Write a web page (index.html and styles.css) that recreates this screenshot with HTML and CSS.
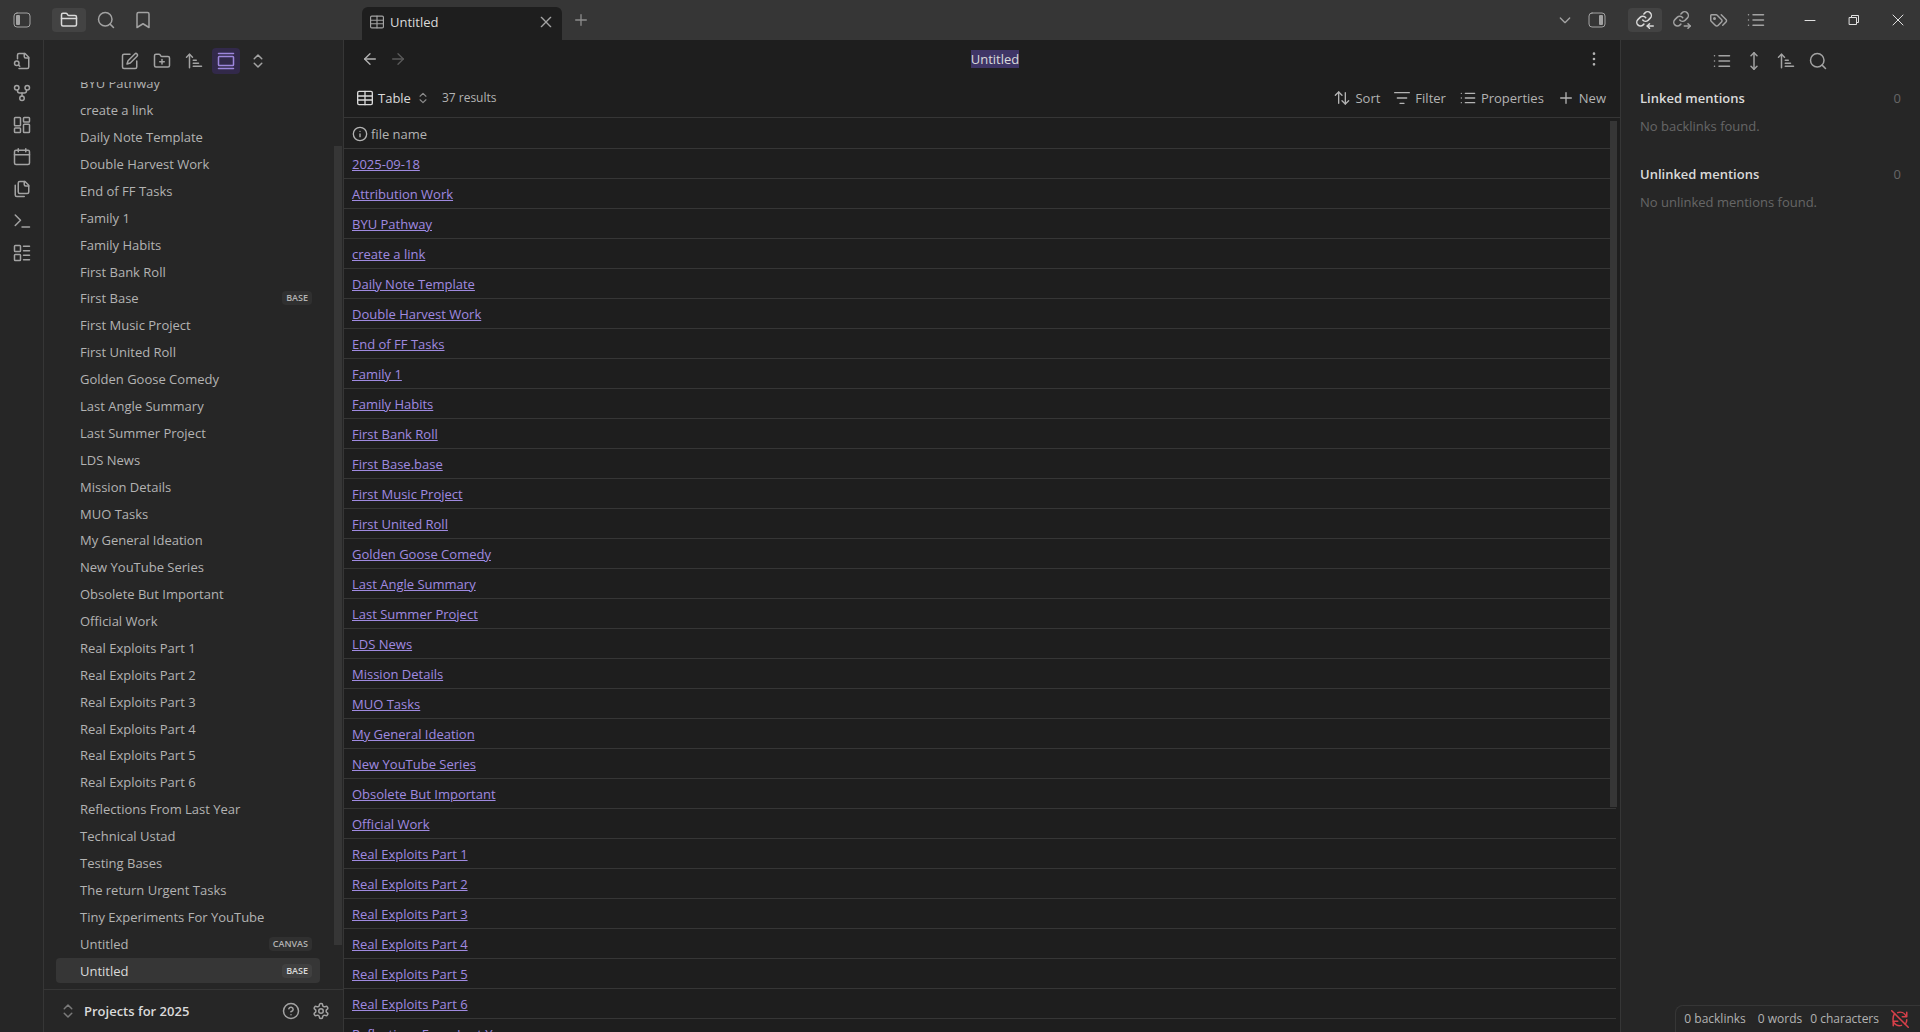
FILE: index.html
```
<!DOCTYPE html>
<html lang="en">
<head>
  <meta charset="UTF-8">
  <meta name="viewport" content="width=device-width, initial-scale=1.0">
  <title>Untitled - Projects for 2025</title>
  <link rel="stylesheet" href="styles.css">
</head>
<body>
<!-- icons used more than once -->
<svg class="sprite" aria-hidden="true">
  <symbol id="i-search" viewBox="0 0 24 24"><circle cx="11" cy="11" r="9"/><path d="m22 22-4.5-4.5"/></symbol>
  <symbol id="i-updown" viewBox="0 0 24 24"><path d="m7 15 5 5 5-5"/><path d="m7 9 5-5 5 5"/></symbol>
  <symbol id="i-sort-asc" viewBox="0 0 24 24"><path d="m2 7 4-4 4 4"/><path d="M6 3v18"/><path d="M11 11h4"/><path d="M11 15h7"/><path d="M11 19h11"/></symbol>
  <symbol id="i-list" viewBox="0 0 24 24"><path d="M8 5h14"/><path d="M8 12h14"/><path d="M8 19h14"/><path d="M2 5h.01"/><path d="M2 12h.01"/><path d="M2 19h.01"/></symbol>
  <symbol id="i-table" viewBox="0 0 24 24"><rect x="1" y="2" width="22" height="20" rx="2"/><path d="M12 2v20"/><path d="M1 9h22"/><path d="M1 15h22"/></symbol>
  <symbol id="i-plus" viewBox="0 0 24 24"><path d="M4 12h16"/><path d="M12 4v16"/></symbol>
  <symbol id="i-close" viewBox="0 0 24 24"><path d="M19 5 5 19"/><path d="m5 5 14 14"/></symbol>
  <symbol id="i-chain" viewBox="0 0 24 24"><path d="M9 12a5 5 0 0 0 7 .500l3-3a4.800 4.800 0 0 0-7-7l-1.500 1.500"/><path d="M13 9a5 5 0 0 0-7.500-.500l-3 3a4.800 4.800 0 0 0 7 7l1-1"/></symbol>
</svg>

<div class="app">
  <header class="titlebar">
    <div class="titlebar-left">
      <button type="button" class="icon-btn" aria-label="Toggle left sidebar"><svg class="icon toggle" viewBox="0 0 18 16"><rect x="1" y="1" width="16" height="14" rx="3"/><rect class="solid" x="3" y="3" width="4" height="10" rx="1"/></svg></button>
      <div class="tab-icons">
        <button type="button" class="icon-btn active" aria-label="Files"><svg class="icon" viewBox="0 0 24 24"><path d="M20 20a2 2 0 0 0 2-2V8a2 2 0 0 0-2-2h-8a2 2 0 0 1-1.700-.9L9.500 3.900A2 2 0 0 0 7.900 3H4a2 2 0 0 0-2 2v13a2 2 0 0 0 2 2Z"/><path d="M2 10h20"/></svg></button>
        <button type="button" class="icon-btn" aria-label="Search"><svg class="icon"><use href="#i-search"/></svg></button>
        <button type="button" class="icon-btn" aria-label="Bookmarks"><svg class="icon" viewBox="0 0 24 24"><path d="m20 22-8-5-8 5V4a2 2 0 0 1 2-2h12a2 2 0 0 1 2 2z"/></svg></button>
      </div>
    </div>
    <div class="titlebar-main">
      <div class="tab">
        <svg class="icon small"><use href="#i-table"/></svg>
        <span class="tab-name">Untitled</span>
        <button type="button" class="plain-btn" aria-label="Close tab"><svg class="icon small"><use href="#i-close"/></svg></button>
      </div>
      <button type="button" class="plain-btn dim new-tab" aria-label="New tab"><svg class="icon small"><use href="#i-plus"/></svg></button>
      <div class="titlebar-end">
        <button type="button" class="plain-btn" aria-label="Tab list"><svg class="icon small" viewBox="0 0 24 24"><path d="m5 9 7 7 7-7"/></svg></button>
        <button type="button" class="plain-btn" aria-label="Toggle right sidebar"><svg class="icon toggle" viewBox="0 0 18 16"><rect x="1" y="1" width="16" height="14" rx="3"/><rect class="solid" x="11" y="3" width="4" height="10" rx="1"/></svg></button>
      </div>
    </div>
    <div class="titlebar-right">
      <div class="tab-icons">
        <button type="button" class="icon-btn active" aria-label="Backlinks"><svg class="icon" viewBox="0 0 24 24"><use href="#i-chain"/><path d="M23 20h-8"/><path d="m18 17-3 3 3 3"/></svg></button>
        <button type="button" class="icon-btn" aria-label="Outgoing links"><svg class="icon" viewBox="0 0 24 24"><use href="#i-chain"/><path d="M15 20h8"/><path d="m20 17 3 3-3 3"/></svg></button>
        <button type="button" class="icon-btn" aria-label="Tags"><svg class="icon" viewBox="0 0 24 24"><path d="m15 5 6.300 6.300a2.400 2.400 0 0 1 0 3.400L17 19"/><path d="M9.600 5.600A2 2 0 0 0 8.200 5H2a1 1 0 0 0-1 1v6.200a2 2 0 0 0 .600 1.400l5.700 5.700a2.400 2.400 0 0 0 3.400 0l4.600-4.600a2.400 2.400 0 0 0 0-3.400Z"/><circle cx="6" cy="10" r="1"/></svg></button>
        <button type="button" class="icon-btn" aria-label="Outline"><svg class="icon"><use href="#i-list"/></svg></button>
      </div>
      <div class="window-controls">
        <button type="button" aria-label="Minimize"><svg class="icon win" viewBox="0 0 12 12"><path d="M1 6.500h10"/></svg></button>
        <button type="button" aria-label="Restore"><svg class="icon win" viewBox="0 0 12 12"><path d="M1.500 3.500h7v7h-7z"/><path d="M3.500 3.500v-2h7v7h-2"/></svg></button>
        <button type="button" aria-label="Close"><svg class="icon win" viewBox="0 0 12 12"><path d="m1 1 10 10"/><path d="M11 1 1 11"/></svg></button>
      </div>
    </div>
  </header>

  <div class="workspace">
    <nav class="ribbon">
      <button type="button" aria-label="Open quick switcher"><svg class="icon" viewBox="0 0 24 24"><path d="M6 9V4a2 2 0 0 1 2-2h8l5 5v13a2 2 0 0 1-2 2H8"/><path d="M15 2v4a2 2 0 0 0 2 2h4"/><circle cx="5" cy="15" r="3"/><path d="m9 19-1.500-1.500"/></svg></button>
      <button type="button" aria-label="Open graph view"><svg class="icon" viewBox="0 0 24 24"><circle cx="12" cy="19" r="3"/><circle cx="5" cy="5" r="3"/><circle cx="19" cy="5" r="3"/><path d="M6 8v1a3 3 0 0 0 3 3h6a3 3 0 0 0 3-3V8"/><path d="M12 12v4"/></svg></button>
      <button type="button" aria-label="Create new canvas"><svg class="icon" viewBox="0 0 24 24"><rect x="2" y="2" width="8" height="11" rx="1"/><rect x="14" y="2" width="8" height="6" rx="1"/><rect x="14" y="11" width="8" height="11" rx="1"/><rect x="2" y="16" width="8" height="6" rx="1"/></svg></button>
      <button type="button" aria-label="Open today's daily note"><svg class="icon" viewBox="0 0 24 24"><path d="M7 1v4"/><path d="M17 1v4"/><rect x="2" y="3" width="20" height="19" rx="2"/><path d="M2 9h20"/></svg></button>
      <button type="button" aria-label="Insert template"><svg class="icon" viewBox="0 0 24 24"><path d="M16 2H9a2 2 0 0 0-2 2v12a2 2 0 0 0 2 2h10a2 2 0 0 0 2-2V7z"/><path d="M15 2v4a2 2 0 0 0 2 2h4"/><path d="M3 7v13a2 2 0 0 0 2 2h10"/></svg></button>
      <button type="button" aria-label="Open command palette"><svg class="icon" viewBox="0 0 24 24"><path d="m3 18 7-7-7-7"/><path d="M12 20h10"/></svg></button>
      <button type="button" aria-label="Create new base"><svg class="icon" viewBox="0 0 24 24"><rect x="2" y="2" width="8" height="8" rx="1"/><rect x="2" y="14" width="8" height="8" rx="1"/><path d="M14 3h8"/><path d="M14 9h8"/><path d="M14 15h8"/><path d="M14 21h8"/></svg></button>
    </nav>

    <aside class="sidebar">
      <div class="nav-buttons">
        <button type="button" aria-label="New note"><svg class="icon" viewBox="0 0 24 24"><path d="M12 3H4a2 2 0 0 0-2 2v15a2 2 0 0 0 2 2h15a2 2 0 0 0 2-2v-8"/><path d="M18.400 2.600a2.100 2.100 0 0 1 3 3l-9 9L8 16l1.400-4.400z"/></svg></button>
        <button type="button" aria-label="New folder"><svg class="icon" viewBox="0 0 24 24"><path d="M12 10v6"/><path d="M9 13h6"/><path d="M20 20a2 2 0 0 0 2-2V8a2 2 0 0 0-2-2h-8a2 2 0 0 1-1.700-.9L9.500 3.900A2 2 0 0 0 7.900 3H4a2 2 0 0 0-2 2v13a2 2 0 0 0 2 2Z"/></svg></button>
        <button type="button" aria-label="Change sort order"><svg class="icon"><use href="#i-sort-asc"/></svg></button>
        <button type="button" class="on" aria-label="Auto-reveal current file"><svg class="icon" viewBox="0 0 24 24"><path d="M2 2h20"/><rect x="2" y="6" width="20" height="12" rx="1"/><path d="M2 22h20"/></svg></button>
        <button type="button" aria-label="Collapse all"><svg class="icon"><use href="#i-updown"/></svg></button>
      </div>
      <div class="file-list">
        <ul>
          <li><a href="#">BYU Pathway</a></li>
          <li><a href="#">create a link</a></li>
          <li><a href="#">Daily Note Template</a></li>
          <li><a href="#">Double Harvest Work</a></li>
          <li><a href="#">End of FF Tasks</a></li>
          <li><a href="#">Family 1</a></li>
          <li><a href="#">Family Habits</a></li>
          <li><a href="#">First Bank Roll</a></li>
          <li><a href="#">First Base <span class="tag">BASE</span></a></li>
          <li><a href="#">First Music Project</a></li>
          <li><a href="#">First United Roll</a></li>
          <li><a href="#">Golden Goose Comedy</a></li>
          <li><a href="#">Last Angle Summary</a></li>
          <li><a href="#">Last Summer Project</a></li>
          <li><a href="#">LDS News</a></li>
          <li><a href="#">Mission Details</a></li>
          <li><a href="#">MUO Tasks</a></li>
          <li><a href="#">My General Ideation</a></li>
          <li><a href="#">New YouTube Series</a></li>
          <li><a href="#">Obsolete But Important</a></li>
          <li><a href="#">Official Work</a></li>
          <li><a href="#">Real Exploits Part 1</a></li>
          <li><a href="#">Real Exploits Part 2</a></li>
          <li><a href="#">Real Exploits Part 3</a></li>
          <li><a href="#">Real Exploits Part 4</a></li>
          <li><a href="#">Real Exploits Part 5</a></li>
          <li><a href="#">Real Exploits Part 6</a></li>
          <li><a href="#">Reflections From Last Year</a></li>
          <li><a href="#">Technical Ustad</a></li>
          <li><a href="#">Testing Bases</a></li>
          <li><a href="#">The return Urgent Tasks</a></li>
          <li><a href="#">Tiny Experiments For YouTube</a></li>
          <li><a href="#">Untitled <span class="tag">CANVAS</span></a></li>
          <li><a href="#" class="selected">Untitled <span class="tag">BASE</span></a></li>
        </ul>
        <div class="scrollbar"></div>
      </div>
      <div class="vault">
        <button type="button" class="vault-name"><svg class="icon"><use href="#i-updown"/></svg>Projects for 2025</button>
        <button type="button" aria-label="Help"><svg class="icon" viewBox="0 0 24 24"><circle cx="12" cy="12" r="10"/><path d="M9.100 9a3 3 0 0 1 5.800 1c0 2-3 3-3 3"/><path d="M12 17h.01"/></svg></button>
        <button type="button" aria-label="Settings"><svg class="icon" viewBox="0 0 24 24"><path d="M12.220 2h-.440a2 2 0 0 0-2 2v.180a2 2 0 0 1-1 1.730l-.430.250a2 2 0 0 1-2 0l-.150-.080a2 2 0 0 0-2.730.730l-.220.380a2 2 0 0 0 .730 2.730l.150.100a2 2 0 0 1 1 1.720v.510a2 2 0 0 1-1 1.740l-.150.090a2 2 0 0 0-.730 2.730l.220.380a2 2 0 0 0 2.730.730l.150-.080a2 2 0 0 1 2 0l.430.250a2 2 0 0 1 1 1.730V20a2 2 0 0 0 2 2h.440a2 2 0 0 0 2-2v-.180a2 2 0 0 1 1-1.730l.430-.250a2 2 0 0 1 2 0l.150.080a2 2 0 0 0 2.730-.730l.220-.390a2 2 0 0 0-.730-2.730l-.150-.080a2 2 0 0 1-1-1.740v-.500a2 2 0 0 1 1-1.740l.150-.090a2 2 0 0 0 .730-2.730l-.220-.380a2 2 0 0 0-2.730-.730l-.150.080a2 2 0 0 1-2 0l-.430-.250a2 2 0 0 1-1-1.730V4a2 2 0 0 0-2-2z"/><circle cx="12" cy="12" r="3"/></svg></button>
      </div>
    </aside>

    <main class="view">
      <div class="view-header">
        <div class="view-nav">
          <button type="button" class="plain-btn" aria-label="Back"><svg class="icon small" viewBox="0 0 24 24"><path d="m12 20-8-8 8-8"/><path d="M20 12H4"/></svg></button>
          <button type="button" class="plain-btn faint" aria-label="Forward"><svg class="icon small" viewBox="0 0 24 24"><path d="M4 12h16"/><path d="m12 4 8 8-8 8"/></svg></button>
        </div>
        <span class="view-title">Untitled</span>
        <div class="view-more">
          <button type="button" class="plain-btn" aria-label="More options"><svg class="icon small dots" viewBox="0 0 24 24"><circle cx="12" cy="4" r="1"/><circle cx="12" cy="12" r="1"/><circle cx="12" cy="20" r="1"/></svg></button>
        </div>
      </div>
      <div class="toolbar">
        <button type="button" class="view-pick"><svg class="icon small"><use href="#i-table"/></svg>Table<svg class="icon updown"><use href="#i-updown"/></svg></button>
        <span class="results">37 results</span>
        <div class="tools">
          <button type="button"><svg class="icon" viewBox="0 0 24 24"><path d="m2 8 5-5 5 5"/><path d="M7 3v17"/><path d="m22 16-5 5-5-5"/><path d="M17 21V4"/></svg>Sort</button>
          <button type="button"><svg class="icon" viewBox="0 0 24 24"><path d="M1 4h22"/><path d="M5 12h14"/><path d="M9 20h6"/></svg>Filter</button>
          <button type="button"><svg class="icon"><use href="#i-list"/></svg>Properties</button>
          <button type="button"><svg class="icon"><use href="#i-plus"/></svg>New</button>
        </div>
      </div>
      <div class="table-wrap">
        <table>
          <thead>
            <tr><th><span class="th-inner"><svg class="icon small" viewBox="0 0 24 24"><circle cx="12" cy="12" r="10"/><path d="M12 16v-4"/><path d="M12 8h.01"/></svg>file name</span></th></tr>
          </thead>
          <tbody>
            <tr><td><a href="#">2025-09-18</a></td></tr>
            <tr><td><a href="#">Attribution Work</a></td></tr>
            <tr><td><a href="#">BYU Pathway</a></td></tr>
            <tr><td><a href="#">create a link</a></td></tr>
            <tr><td><a href="#">Daily Note Template</a></td></tr>
            <tr><td><a href="#">Double Harvest Work</a></td></tr>
            <tr><td><a href="#">End of FF Tasks</a></td></tr>
            <tr><td><a href="#">Family 1</a></td></tr>
            <tr><td><a href="#">Family Habits</a></td></tr>
            <tr><td><a href="#">First Bank Roll</a></td></tr>
            <tr><td><a href="#">First Base.base</a></td></tr>
            <tr><td><a href="#">First Music Project</a></td></tr>
            <tr><td><a href="#">First United Roll</a></td></tr>
            <tr><td><a href="#">Golden Goose Comedy</a></td></tr>
            <tr><td><a href="#">Last Angle Summary</a></td></tr>
            <tr><td><a href="#">Last Summer Project</a></td></tr>
            <tr><td><a href="#">LDS News</a></td></tr>
            <tr><td><a href="#">Mission Details</a></td></tr>
            <tr><td><a href="#">MUO Tasks</a></td></tr>
            <tr><td><a href="#">My General Ideation</a></td></tr>
            <tr><td><a href="#">New YouTube Series</a></td></tr>
            <tr><td><a href="#">Obsolete But Important</a></td></tr>
            <tr><td><a href="#">Official Work</a></td></tr>
            <tr><td><a href="#">Real Exploits Part 1</a></td></tr>
            <tr><td><a href="#">Real Exploits Part 2</a></td></tr>
            <tr><td><a href="#">Real Exploits Part 3</a></td></tr>
            <tr><td><a href="#">Real Exploits Part 4</a></td></tr>
            <tr><td><a href="#">Real Exploits Part 5</a></td></tr>
            <tr><td><a href="#">Real Exploits Part 6</a></td></tr>
            <tr><td><a href="#">Reflections From Last Year</a></td></tr>
          </tbody>
        </table>
        <div class="scrollbar"></div>
      </div>
    </main>

    <aside class="backlinks">
      <div class="nav-buttons">
        <button type="button" aria-label="Collapse results"><svg class="icon"><use href="#i-list"/></svg></button>
        <button type="button" aria-label="Show more context"><svg class="icon" viewBox="0 0 24 24"><path d="M12 1v22"/><path d="m8 19 4 4 4-4"/><path d="m8 5 4-4 4 4"/></svg></button>
        <button type="button" aria-label="Change sort order"><svg class="icon"><use href="#i-sort-asc"/></svg></button>
        <button type="button" aria-label="Show search filter"><svg class="icon"><use href="#i-search"/></svg></button>
      </div>
      <section class="mentions">
        <h2>Linked mentions <span class="count">0</span></h2>
        <p>No backlinks found.</p>
      </section>
      <section class="mentions">
        <h2>Unlinked mentions <span class="count">0</span></h2>
        <p>No unlinked mentions found.</p>
      </section>
      <footer class="status">
        <span class="status-links">0 backlinks</span>
        <span>0 words</span>
        <span>0 characters</span>
        <svg class="icon" viewBox="0 0 24 24"><path d="M20 8a9 9 0 0 0-11-4.500"/><path d="M21 3v6h-6"/><path d="M3 10a9 9 0 0 0 0 5c1 4 6 7 11 5.500"/><path d="M9 15H3v6"/><path d="M5 5a9 9 0 0 0-2 4"/><path d="M21 13a9 9 0 0 1-2 6"/><path d="m1 1 22 22"/></svg>
      </footer>
    </aside>
  </div>
</div>
</body>
</html>
```

FILE: styles.css
```
* {
  box-sizing: border-box;
  margin: 0;
  padding: 0;
}
body {
  background-color: #1e1e1e;
  color: #b3b3b3;
  font-family: "Open Sans", "Noto Sans", sans-serif;
  font-size: 13px;
  line-height: 18px;
}
button {
  display: flex;
  align-items: center;
  justify-content: center;
  border: 0;
  background: none;
  color: inherit;
  font: inherit;
}
a {
  color: inherit;
}
ul {
  list-style: none;
}
.sprite {
  display: none;
}
.icon {
  display: block;
  flex: none;
  width: 18px;
  height: 18px;
  fill: none;
  stroke: currentColor;
  stroke-width: 2;
  stroke-linecap: round;
  stroke-linejoin: round;
}
.icon.small {
  width: 16px;
  height: 16px;
}
.icon .solid {
  fill: currentColor;
  stroke: none;
}
.app {
  display: flex;
  flex-direction: column;
  height: 100vh;
  overflow: hidden;
}

/* title bar */
.titlebar {
  display: flex;
  flex: none;
  height: 40px;
  background-color: #363636;
  color: #a3a3a3;
}
.titlebar-left {
  display: flex;
  align-items: center;
  gap: 13px;
  width: 344px;
  padding-left: 5px;
}
.tab-icons {
  display: flex;
  gap: 3px;
}
.icon-btn {
  width: 34px;
  height: 24px;
  border-radius: 4px;
}
.icon-btn.active {
  background-color: #434343;
  color: #dadada;
}
.icon.toggle {
  height: 16px;
  stroke-width: 1;
}
.titlebar-main {
  display: flex;
  flex: 1;
  align-items: center;
  padding-left: 18px;
}
.tab {
  display: flex;
  align-items: center;
  align-self: flex-end;
  gap: 6px;
  width: 200px;
  height: 33px;
  padding: 0 8px 4px;
  border-radius: 6px 6px 0 0;
  background-color: #1e1e1e;
}
.tab > .icon {
  width: 14px;
  height: 14px;
}
.tab-name {
  flex: 1;
  color: #dadada;
}
.plain-btn {
  min-width: 16px;
}
.plain-btn.dim {
  color: #8c8c8c;
}
.new-tab {
  margin-left: 11px;
}
.plain-btn.faint {
  color: #5a5a5a;
}
.titlebar-end {
  display: flex;
  align-items: center;
  gap: 15px;
  margin-left: auto;
  padding-right: 14px;
}
.titlebar-right {
  display: flex;
  align-items: center;
  justify-content: space-between;
  width: 300px;
  padding-left: 8px;
}
.window-controls {
  display: flex;
  color: #e0e0e0;
}
.window-controls button {
  width: 44px;
  height: 40px;
}
.icon.win {
  width: 12px;
  height: 12px;
  stroke-width: 1;
}

/* ribbon on the far left */
.workspace {
  display: flex;
  flex: 1;
  min-height: 0;
}
.ribbon {
  display: flex;
  flex: none;
  flex-direction: column;
  align-items: center;
  gap: 6px;
  width: 44px;
  padding-top: 8px;
  border-right: 1px solid #363636;
  background-color: #262626;
  color: #a3a3a3;
}
.ribbon button {
  width: 28px;
  height: 26px;
}

/* file explorer */
.sidebar {
  display: flex;
  flex: none;
  flex-direction: column;
  width: 300px;
  border-right: 1px solid #363636;
  background-color: #262626;
}
.nav-buttons {
  display: flex;
  flex: none;
  justify-content: center;
  gap: 4px;
  height: 42px;
  padding-top: 8px;
  color: #a3a3a3;
}
.nav-buttons button {
  width: 28px;
  height: 26px;
  border-radius: 4px;
}
.nav-buttons .on {
  background-color: #32294a;
  color: #9d86dc;
}
.file-list {
  position: relative;
  display: flex;
  flex: 1;
  flex-direction: column;
  min-height: 0;
  padding: 0 23px 5px 12px;
  overflow: hidden;
}
.file-list ul {
  display: grid;
  flex: 1;
  grid-auto-rows: 1fr;
  margin-top: -12px;
}
.file-list li {
  display: flex;
  padding: 1px 0;
}
.file-list a {
  display: flex;
  flex: 1;
  align-items: center;
  justify-content: space-between;
  padding: 0 8px 0 24px;
  border-radius: 4px;
  text-decoration: none;
}
.file-list .selected {
  background-color: #363636;
  color: #dadada;
}
.tag {
  padding: 0 4px;
  border-radius: 4px;
  background-color: #303030;
  font-size: 9px;
  font-weight: 600;
  line-height: 14px;
}
.selected .tag {
  background-color: #404040;
}
.scrollbar {
  position: absolute;
  background-color: #363636;
}
.file-list .scrollbar {
  top: 64px;
  right: 1px;
  bottom: 44px;
  width: 8px;
}
.vault {
  display: flex;
  flex: none;
  align-items: center;
  gap: 12px;
  height: 43px;
  padding: 0 13px 0 15px;
  border-top: 1px solid #363636;
  color: #a3a3a3;
}
.vault-name {
  justify-content: flex-start;
  gap: 7px;
  margin-right: auto;
  color: #dadada;
  font-weight: 600;
}
.vault-name .icon {
  color: #7a7a7a;
}

/* base view */
.view {
  display: flex;
  flex: 1;
  flex-direction: column;
  min-width: 0;
  background-color: #1e1e1e;
}
.view-header {
  display: flex;
  flex: none;
  align-items: center;
  height: 38px;
  padding: 0 18px;
}
.view-nav,
.view-more {
  display: flex;
  flex: 1;
  gap: 12px;
}
.view-more {
  justify-content: flex-end;
}
.view-title {
  margin-left: 26px;
  background-color: #3f3566;
  color: #dadada;
}
.toolbar {
  display: flex;
  flex: none;
  align-items: center;
  gap: 12px;
  height: 40px;
  padding: 0 14px 0 13px;
  border-bottom: 1px solid #363636;
}
.toolbar button {
  gap: 5px;
}
.view-pick {
  color: #dadada;
}
.icon.updown {
  width: 14px;
  height: 14px;
  color: #8c8c8c;
}
.results {
  font-size: 12px;
}
.tools {
  display: flex;
  gap: 14px;
  margin-left: auto;
}
.tools .icon {
  width: 16px;
}
.table-wrap {
  position: relative;
  flex: 1;
  min-height: 0;
  padding-right: 4px;
  overflow: hidden;
}
table {
  width: 100%;
  border-collapse: collapse;
}
th,
td {
  height: 30px;
  padding: 2px 8px 0;
  border-bottom: 1px solid #363636;
  font-weight: normal;
  text-align: left;
}
.th-inner {
  display: flex;
  align-items: center;
  gap: 3px;
}
td a {
  color: #a08ae0;
}
.table-wrap .scrollbar {
  top: 3px;
  right: 3px;
  width: 7px;
  height: 75%;
}

/* backlinks pane */
.backlinks {
  display: flex;
  flex: none;
  flex-direction: column;
  width: 300px;
  border-left: 1px solid #363636;
  background-color: #262626;
}
.backlinks .nav-buttons {
  padding-right: 2px;
}
.mentions {
  padding: 7px 19px 23px;
}
.mentions h2 {
  display: flex;
  justify-content: space-between;
  color: #dadada;
  font-size: 13px;
  font-weight: 600;
}
.mentions p {
  padding-top: 10px;
  color: #666666;
}
.count {
  color: #666666;
  font-weight: normal;
}
.status {
  display: flex;
  align-items: center;
  align-self: flex-end;
  gap: 8px;
  height: 27px;
  margin-top: auto;
  padding: 0 11px 0 8px;
  border-top: 1px solid #363636;
  border-left: 1px solid #363636;
  border-radius: 8px 0 0 0;
  font-size: 12px;
}
.status-links {
  margin-right: 4px;
}
.status .icon {
  margin-left: 4px;
  color: #d8404a;
}
```
